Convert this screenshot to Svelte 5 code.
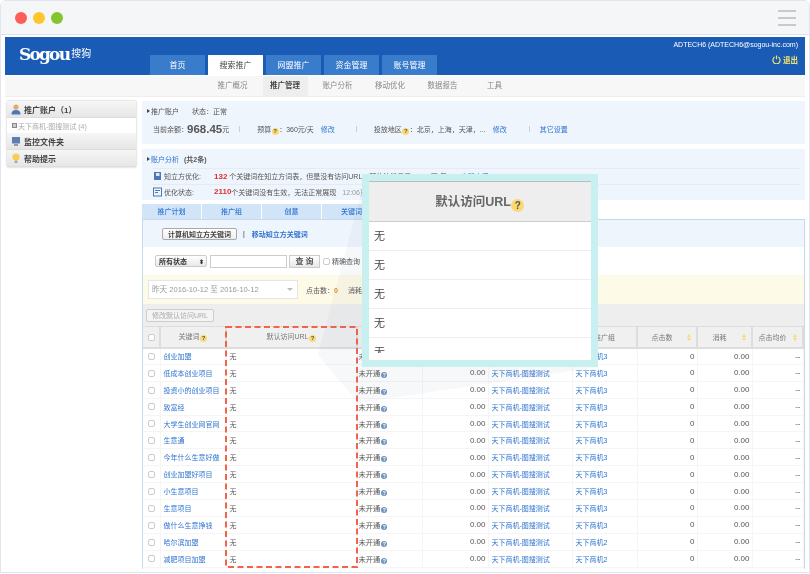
<script>
	const tabs = ['首页', '搜索推广', '网盟推广', '资金管理', '账号管理'];
	const subs = ['推广概况', '推广管理', '账户分析', '移动优化', '数据报告', '工具'];
	const levels = ['推广计划', '推广组', '创意', '关键词'];
	const keywords = [
		'创业加盟',
		'低成本创业项目',
		'投资小的创业项目',
		'致富经',
		'大学生创业网官网',
		'生意通',
		'今年什么生意好做',
		'创业加盟好项目',
		'小生意项目',
		'生意项目',
		'做什么生意挣钱',
		'哈尔滨加盟',
		'减肥项目加盟'
	];
	const rows = keywords.map((word, i) => ({ word, unit: i < 11 ? '天下商机3' : '天下商机2' }));
</script>

<div class="page">
	<div class="chrome">
		<div class="lights">
			<i class="red"></i>
			<i class="yellow"></i>
			<i class="green"></i>
		</div>
		<div class="burger"><i></i><i></i><i></i></div>
	</div>

	<div class="site">
		<header class="top">
			<div class="logo"><b>Sogou</b><span>搜狗</span></div>
			<nav class="tabs">
				{#each tabs as tab}
					<span class="tab" class:on={tab === '搜索推广'}>{tab}</span>
				{/each}
			</nav>
			<div class="user">
				<div class="mail">ADTECH6 (ADTECH6@sogou-inc.com)</div>
				<div class="quit">
					<svg width="9" height="9" viewBox="0 0 10 10">
						<path d="M3 2.3a4 4 0 1 0 4 0M5 .6v4.2" fill="none" stroke="#f2e36b" stroke-width="1.3" />
					</svg>
					退出
				</div>
			</div>
		</header>

		<nav class="subnav">
			{#each subs as sub}
				<span class="sub" class:on={sub === '推广管理'}>{sub}</span>
			{/each}
		</nav>

		<div class="body">
			<aside class="side">
				<div class="acc">
					<svg width="10" height="11" viewBox="0 0 10 11">
						<circle cx="5" cy="3" r="2.6" fill="#e8a86c" />
						<path d="M.5 10.5c0-3.500 2-4.500 4.500-4.500s4.500 1 4.500 4.500z" fill="#4a78b8" />
					</svg>
					推广账户（1）
				</div>
				<div class="acc-row"><i class="plus"></i>天下商机-图搜测试 (4)</div>
				<div class="acc">
					<svg width="10" height="11" viewBox="0 0 10 11">
						<rect x="1" y="1" width="8" height="6.500" fill="#5b7fb5" />
						<rect x="3" y="8" width="4" height="2" fill="#999" />
					</svg>
					监控文件夹
				</div>
				<div class="acc">
					<svg width="10" height="11" viewBox="0 0 10 11">
						<circle cx="5" cy="4" r="3.600" fill="#f5cf55" />
						<rect x="3.500" y="7.500" width="3" height="2.500" fill="#aaa" />
					</svg>
					帮助提示
				</div>
			</aside>

			<main class="main">
				<section class="panel account">
					<div class="line-a">
						<i class="arrow"></i><span>推广账户</span><span class="state">状态：正常</span>
					</div>
					<div class="line-b">
						<span class="balance-label">当前余额：</span><b class="balance">968.45</b>元
						<i class="bar bar1"></i>
						<span>预算<i class="q">?</i>：360元/天</span><a class="fix">修改</a>
						<i class="bar bar2"></i>
						<span>投放地区<i class="q">?</i>：北京，上海，天津，...</span><a class="fix">修改</a>
						<i class="bar bar3"></i>
						<a>其它设置</a>
					</div>
				</section>

				<section class="panel analysis">
					<div class="line-a">
						<i class="arrow"></i><a>账户分析</a><span class="count">(共2条)</span>
					</div>
					<div class="advice">
						<svg width="9" height="10" viewBox="0 0 9 10">
							<path d="M1 1h7v8H1z" fill="#4a78b8" />
							<path d="M3 2h3.500v3H3z" fill="#dfe9f6" />
						</svg>
						<span class="advice-name">知立方优化:</span>
						<b class="num">132</b>
						<span>&nbsp;个关键词在知立方词表，但是没有访问URL，预估流量日示 33.33万/每</span>
						<a class="look">立即查看</a>
					</div>
					<div class="advice">
						<svg width="9" height="10" viewBox="0 0 9 10">
							<rect x=".5" y="1" width="8" height="8" fill="none" stroke="#4a78b8" />
							<path d="M2 3.500h5M2 5.500h3" stroke="#4a78b8" />
						</svg>
						<span class="advice-name">优化状态:</span>
						<b class="num">2110</b>
						<span>个关键词没有生效，无法正常展现</span>
						<span class="time">12:06更新</span>
					</div>
				</section>

				<div class="levels">
					{#each levels as level}
						<span class="level">{level}</span>
					{/each}
				</div>

				<section class="box">
					<div class="tools">
						<button class="btn">计算机知立方关键词</button>
						<span class="sep">|</span>
						<a class="strong">移动知立方关键词</a>
					</div>
					<div class="filter">
						<span class="select">所有状态<em>⬍</em></span>
						<span class="input"></span>
						<span class="search">查 询</span>
						<i class="check"></i>
						<span class="exact">精确查询</span>
					</div>
					<div class="dates">
						<span class="range">昨天 2016-10-12 至 2016-10-12<i class="caret"></i></span>
						<span class="stat">点击数：<b>0</b></span>
						<span class="stat">消耗：<b>0.00</b></span>
					</div>
					<div class="batch"><span class="off">修改默认访问URL</span></div>

					<div class="grid-wrap">
						<table>
							<colgroup>
								<col style="width: 17px" />
								<col style="width: 66px" />
								<col style="width: 131px" />
								<col style="width: 65px" />
								<col style="width: 66px" />
								<col style="width: 84px" />
								<col style="width: 65px" />
								<col style="width: 60px" />
								<col style="width: 55px" />
								<col style="width: 51px" />
							</colgroup>
							<thead>
								<tr>
									<th><i class="check"></i></th>
									<th>关键词<i class="q">?</i></th>
									<th>默认访问URL<i class="q">?</i></th>
									<th>状态</th>
									<th>出价</th>
									<th>推广计划</th>
									<th>推广组</th>
									<th class="sort">点击数<i class="updown"></i></th>
									<th class="sort">消耗<i class="updown"></i></th>
									<th class="sort">点击均价<i class="updown"></i></th>
								</tr>
							</thead>
							<tbody>
								{#each rows as row}
									<tr>
										<td><i class="check"></i></td>
										<td><a>{row.word}</a></td>
										<td>无</td>
										<td class="closed">未开通<i class="tip">?</i></td>
										<td class="right">0.00</td>
										<td><a>天下商机-图搜测试</a></td>
										<td><a>{row.unit}</a></td>
										<td class="right">0</td>
										<td class="right">0.00</td>
										<td class="right">--</td>
									</tr>
								{/each}
							</tbody>
						</table>
						<svg class="dashes" width="134" height="243" viewBox="0 0 134 243">
							<rect x="1" y="1" width="131" height="240" fill="none" stroke="#f4624c" stroke-width="2" stroke-dasharray="6 3.500" />
						</svg>
					</div>
				</section>
			</main>
		</div>
	</div>

	<svg class="wedge" width="810" height="574" viewBox="0 0 810 574">
		<polygon points="362,190 318,355 358,403 598,367 598,174" fill="#7f8a99" fill-opacity="0.06" />
	</svg>

	<div class="popup">
		<div class="popup-head">默认访问URL<i class="q big">?</i></div>
		<div class="popup-rows">
			<div class="popup-row">无</div>
			<div class="popup-row">无</div>
			<div class="popup-row">无</div>
			<div class="popup-row">无</div>
			<div class="popup-row">无</div>
		</div>
	</div>
</div>

<style>
	:global(body) {
		margin: 0;
		background: #fff;
	}

	.page {
		position: relative;
		width: 810px;
		height: 573px;
		overflow: hidden;
		box-sizing: border-box;
		border: 1px solid #e2e5f0;
		border-radius: 6px 6px 0 0;
		background: #fff;
		font: 7px 'Liberation Sans', 'Noto Sans CJK SC', sans-serif;
		color: #555;
		filter: blur(0.25px);
	}

	a {
		color: #2f74d0;
	}

	i {
		font-style: normal;
	}

	.chrome {
		display: flex;
		align-items: center;
		justify-content: space-between;
		height: 33px;
		padding: 0 13px 0 14px;
		background: #f5f6f8;
		border-bottom: 1px solid #dfe2ea;
	}

	.lights {
		display: flex;
		gap: 6px;
	}

	.lights i {
		width: 12px;
		height: 12px;
		border-radius: 50%;
	}

	.red {
		background: #fb5f57;
	}

	.yellow {
		background: #fec62c;
	}

	.green {
		background: #84c52f;
	}

	.burger {
		display: flex;
		flex-direction: column;
		gap: 5px;
	}

	.burger i {
		width: 18px;
		height: 2px;
		background: #c8c9cc;
	}

	.site {
		margin: 2px 4px 0;
	}

	.top {
		display: flex;
		height: 38px;
		background: #1a5cb5;
	}

	.logo {
		width: 145px;
		padding: 7px 0 0 14px;
		box-sizing: border-box;
		color: #fff;
		white-space: nowrap;
	}

	.logo b {
		font: bold 17px/20px 'DejaVu Serif', serif;
		letter-spacing: -1.8px;
	}

	.logo span {
		font: 10px 'Noto Sans CJK SC', sans-serif;
		margin-left: 2px;
		position: relative;
		top: -3px;
	}

	.tabs {
		display: flex;
		align-self: flex-end;
		gap: 3px;
	}

	.tab {
		width: 55px;
		height: 20px;
		line-height: 21px;
		text-align: center;
		background: #3a7ccc;
		color: #fff;
		font-size: 8px;
	}

	.tab.on {
		background: #fff;
		color: #444;
	}

	.user {
		margin-left: auto;
		padding: 3px 7px 0 0;
		text-align: right;
		color: #fff;
		font-size: 7px;
	}

	.mail {
		line-height: 10px;
	}

	.quit {
		margin-top: 4px;
		display: flex;
		align-items: center;
		justify-content: flex-end;
		gap: 2px;
		font-weight: bold;
		color: #f2e36b;
		font-size: 7.5px;
	}

	.subnav {
		display: flex;
		height: 20px;
		margin-top: 1px;
		padding-left: 205px;
		background: #f7f7f7;
		border-bottom: 1px solid #eee;
		color: #888;
		font-size: 7.5px;
		line-height: 20px;
	}

	.sub {
		padding: 0 7.5px;
		margin-right: 7.5px;
	}

	.sub:last-child {
		margin-left: 7px;
	}

	.sub.on {
		background: #eee;
		color: #444;
		font-weight: bold;
	}

	.body {
		display: flex;
		align-items: flex-start;
		padding-top: 4px;
	}

	.side {
		width: 129px;
		margin-left: 2px;
		box-shadow: 0 0 2px #bbb;
	}

	.acc {
		display: flex;
		align-items: center;
		gap: 3px;
		height: 17px;
		padding-left: 4px;
		background: linear-gradient(#f6f6f6, #e6e6e6);
		border-bottom: 1px solid #ddd;
		box-sizing: border-box;
		font-size: 8px;
		font-weight: bold;
		color: #444;
	}

	.acc-row {
		display: flex;
		align-items: center;
		height: 15px;
		padding-left: 5px;
		background: #fff;
		color: #aaa;
		font-size: 7px;
	}

	.plus {
		width: 5px;
		height: 5px;
		margin-right: 1px;
		border: 1px solid #888;
		background: #ccc;
		box-sizing: border-box;
	}

	.main {
		width: 663px;
		margin-left: 6px;
	}

	.panel {
		background: #eff5fd;
		color: #555;
	}

	.account {
		height: 43px;
		margin-bottom: 5px;
	}

	.analysis {
		height: 51px;
		margin-bottom: 4px;
	}

	.line-a {
		display: flex;
		align-items: center;
		height: 19px;
		padding-left: 5px;
	}

	.arrow {
		width: 0;
		height: 0;
		margin-right: 1px;
		border-left: 3px solid #444;
		border-top: 2.5px solid transparent;
		border-bottom: 2.5px solid transparent;
	}

	.state {
		margin-left: 13px;
	}

	.count {
		margin-left: 5px;
		font-weight: bold;
	}

	.line-b {
		display: flex;
		align-items: center;
		height: 18px;
		padding-left: 11px;
		white-space: nowrap;
	}

	.balance {
		margin: 0 0 0 -1px;
		font-size: 11.5px;
	}

	.bar {
		width: 1px;
		height: 6px;
		background: #ccd;
	}

	.bar1 {
		margin: 0 17px 0 10px;
	}

	.bar2 {
		margin: 0 17px 0 21px;
	}

	.bar3 {
		margin: 0 10px 0 22px;
	}

	.fix {
		margin-left: 7px;
	}

	.q {
		display: inline-block;
		width: 7px;
		height: 7px;
		margin: 0 .5px;
		border-radius: 50%;
		background: #fbd873;
		color: #555;
		font: bold 6px/7px 'Liberation Sans', sans-serif;
		text-align: center;
		vertical-align: -1px;
	}

	.advice {
		display: flex;
		align-items: center;
		height: 15.5px;
		margin: 0 5px 0 11px;
		border-top: 1px solid #e4ebf4;
		box-sizing: border-box;
		white-space: nowrap;
	}

	.advice svg {
		margin-right: 2px;
	}

	.advice-name {
		width: 50px;
	}

	.num {
		color: #d9322e;
		font-size: 8px;
	}

	.look {
		margin-left: 14px;
	}

	.time {
		margin-left: 6px;
		color: #999;
	}

	.levels {
		display: flex;
		gap: 1px;
		height: 15px;
	}

	.level {
		width: 59px;
		line-height: 15px;
		text-align: center;
		background: #d2e4f8;
		color: #2f74d0;
		font-weight: 500;
	}

	.box {
		border: 1px solid #c5d9ef;
		border-bottom: 0;
		height: 350px;
		box-sizing: border-box;
	}

	.tools {
		display: flex;
		align-items: center;
		height: 27px;
		padding-left: 19px;
		background: #eff5fd;
	}

	.btn {
		width: 75px;
		height: 12px;
		padding: 0;
		border: 1px solid #aaa;
		border-radius: 2px;
		background: linear-gradient(#fff, #eee);
		font: bold 7px 'Liberation Sans', 'Noto Sans CJK SC', sans-serif;
		color: #444;
	}

	.sep {
		margin: 0 7px 0 6px;
		color: #333;
	}

	.strong {
		font-weight: bold;
	}

	.filter {
		display: flex;
		align-items: center;
		height: 28px;
		padding-left: 12px;
	}

	.select {
		display: flex;
		justify-content: space-between;
		align-items: center;
		width: 45px;
		height: 10px;
		padding: 0 2px 0 3px;
		border: 1px solid #ccc;
		border-radius: 2px;
		background: linear-gradient(#fff, #e8e8e8);
		color: #333;
		font-weight: bold;
	}

	.select em {
		font-style: normal;
		font-size: 6px;
	}

	.input {
		width: 75px;
		height: 11px;
		margin-left: 3px;
		border: 1px solid #ccc;
	}

	.search {
		width: 29px;
		height: 11px;
		margin-left: 2px;
		line-height: 11px;
		text-align: center;
		border: 1px solid #ccc;
		background: linear-gradient(#fff, #e8e8e8);
		font-size: 8px;
		font-weight: bold;
	}

	.filter .check {
		margin-left: 3px;
	}

	.exact {
		margin-left: 2px;
		white-space: nowrap;
	}

	.check {
		display: inline-block;
		width: 7px;
		height: 7px;
		border: 1px solid #ccc;
		border-radius: 2px;
		background: #fff;
		box-sizing: border-box;
		vertical-align: middle;
	}

	.dates {
		display: flex;
		align-items: center;
		height: 29px;
		padding-left: 5px;
		background: #fefae8;
	}

	.range {
		position: relative;
		width: 145px;
		height: 17px;
		line-height: 17px;
		padding-left: 3px;
		border: 1px solid #e6e6e6;
		background: #fff;
		color: #999;
		font-size: 7.6px;
		white-space: nowrap;
	}

	.caret {
		position: absolute;
		right: 4px;
		top: 7px;
		border-top: 3px solid #bbb;
		border-left: 3.5px solid transparent;
		border-right: 3.5px solid transparent;
	}

	.stat {
		margin-left: 8px;
		margin-right: 2px;
		white-space: nowrap;
	}

	.stat b {
		color: #e8882a;
	}

	.batch {
		display: flex;
		align-items: center;
		height: 22px;
		padding-left: 3px;
		background: #eee;
	}

	.off {
		width: 66px;
		height: 11px;
		line-height: 11px;
		text-align: center;
		border: 1px solid #ccc;
		border-radius: 2px;
		background: #f4f4f4;
		color: #aaa;
		white-space: nowrap;
	}

	.grid-wrap {
		position: relative;
	}

	table {
		width: 660px;
		table-layout: fixed;
		border-collapse: collapse;
		font-size: 7px;
	}

	th {
		height: 21px;
		padding: 0;
		box-sizing: border-box;
		background: #f0f0f0;
		border: 1px solid #ddd;
		border-width: 1px 2px 2px 0;
		color: #777;
		font-weight: normal;
		white-space: nowrap;
		position: relative;
	}

	td {
		height: 16.9px;
		padding: 0 2px 0 3px;
		box-sizing: border-box;
		border: 1px solid #f5f5f5;
		border-width: 0 1px 1px 0;
		white-space: nowrap;
		overflow: hidden;
	}

	td:first-child {
		text-align: center;
		padding: 0;
	}

	td a {
		color: #2f74d0;
	}

	.right {
		text-align: right;
		font-size: 8px;
	}

	.closed {
		padding: 0 0 0 1px;
		font-size: 7.3px;
	}

	.tip {
		display: inline-block;
		width: 6px;
		height: 6px;
		margin-left: 1px;
		border-radius: 50%;
		background: #6a94c4;
		color: #fff;
		font: bold 5px/6px 'Liberation Sans', sans-serif;
		text-align: center;
		vertical-align: -1px;
	}

	.sort {
		padding-right: 10px;
	}

	.updown {
		position: absolute;
		right: 5px;
		top: 7px;
		display: flex;
		flex-direction: column;
		gap: 1px;
	}

	.updown::before,
	.updown::after {
		content: '';
		border-left: 2.5px solid transparent;
		border-right: 2.5px solid transparent;
	}

	.updown::before {
		border-bottom: 3px solid #fbd873;
	}

	.updown::after {
		border-top: 3px solid #fbd873;
	}

	.dashes {
		position: absolute;
		left: 82px;
		top: 0;
	}

	.wedge {
		position: absolute;
		left: -1px;
		top: -1px;
		pointer-events: none;
	}

	.popup {
		position: absolute;
		left: 361px;
		top: 173px;
		width: 236px;
		height: 193px;
		box-sizing: border-box;
		border: 7px solid #c9f0f0;
		padding-bottom: 7px;
		background: #fff;
	}

	.popup-head {
		height: 41px;
		line-height: 41px;
		text-align: center;
		background: #eee;
		border-top: 1px solid #bbb;
		border-bottom: 1px solid #ccc;
		box-sizing: border-box;
		font-size: 12.5px;
		font-weight: bold;
		color: #666;
	}

	.q.big {
		width: 13px;
		height: 13px;
		font-size: 10px;
		line-height: 13px;
		vertical-align: -3px;
	}

	.popup-rows {
		height: 131px;
		overflow: hidden;
	}

	.popup-row {
		height: 29px;
		line-height: 28px;
		padding-left: 5px;
		box-sizing: border-box;
		border-bottom: 1px solid #eee;
		font-size: 11px;
		color: #444;
	}
</style>
